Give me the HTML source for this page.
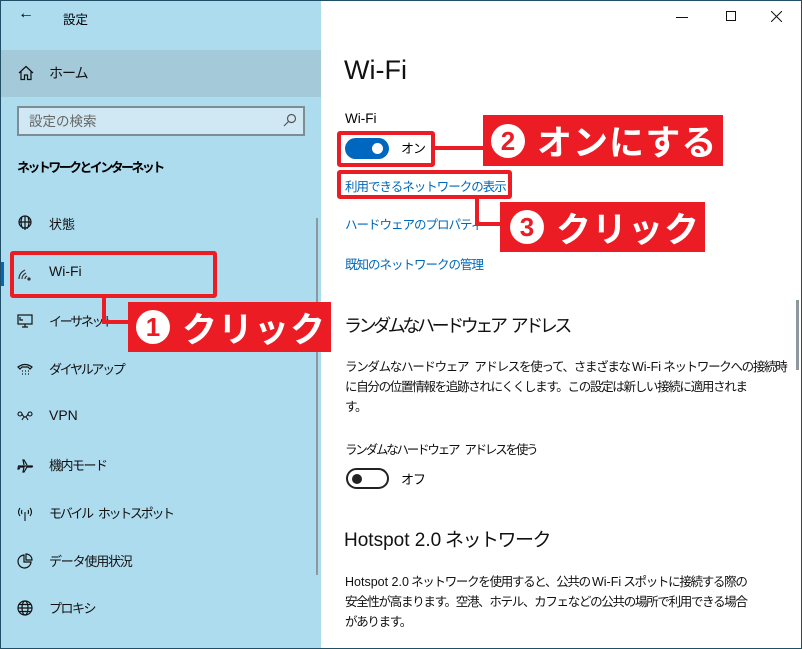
<!DOCTYPE html>
<html><head><meta charset="utf-8"><style>
*{margin:0;padding:0;box-sizing:border-box}
body{width:802px;height:649px;overflow:hidden;background:#fff;font-family:"Liberation Sans","Noto Sans CJK JP",sans-serif;color:#000;position:relative}
.a{position:absolute;white-space:nowrap}
#frame{position:absolute;left:0;top:0;width:802px;height:649px;border:1px solid #1f4e66;pointer-events:none;z-index:50}
#left{position:absolute;left:0;top:0;width:321px;height:649px;background:#aedcef}
.nav{font-size:13px;color:#111;letter-spacing:-2.3px}
.ic{position:absolute;left:17px}
.link{color:#0067b8;font-size:12.5px;letter-spacing:-1px}
.red{position:absolute;background:#ec1c24}
.rb{position:absolute;border:4px solid #ec1c24;border-radius:3px}
.lab{position:absolute;background:#ec1c24;color:#fff;font-weight:bold;font-size:35px;display:flex;align-items:center;white-space:nowrap;letter-spacing:1px}
.num{display:inline-block;width:34px;height:34px;border-radius:50%;background:#fff;color:#ec1c24;font-size:26px;text-align:center;line-height:34px;margin-right:12px;letter-spacing:0}
p.t{font-size:12.5px;line-height:20px;color:#111;letter-spacing:-1.3px}
.l{letter-spacing:0}
.sp{display:inline-block;width:6px}
</style></head><body>
<div id="left">
  <div class="a" style="left:18px;top:5px;font-size:16px">&#8592;</div>
  <div class="a" style="left:63px;top:9px;font-size:12.5px">設定</div>
  <div class="a" style="left:0;top:50px;width:321px;height:47px;background:#a4c9d9"></div>
  <svg class="a" style="left:18px;top:65px" width="16" height="16" viewBox="0 0 16 16" fill="none" stroke="#111" stroke-width="1.2"><path d="M1 8 L8 1.5 L15 8 M3 6.5 V14.5 H6.5 V10 H9.5 V14.5 H13 V6.5"/></svg>
  <div class="a nav" style="left:49px;top:63px;font-size:14px;letter-spacing:-1px">ホーム</div>
  <div class="a" style="left:17px;top:106px;width:288px;height:30px;border:2px solid #7e8d94;background:#cfe8f3"></div>
  <div class="a" style="left:29px;top:110px;font-size:13.5px;color:#666">設定の検索</div>
  <svg class="a" style="left:283px;top:113px" width="14" height="14" viewBox="0 0 14 14" fill="none" stroke="#555" stroke-width="1.2"><circle cx="8.5" cy="5.5" r="4"/><path d="M5.5 8.5 L1 13"/></svg>
  <div class="a" style="left:17px;top:157px;font-size:13px;font-weight:bold;letter-spacing:-2.6px">ネットワークとインターネット</div>
  <div class="a" style="left:316px;top:218px;width:2px;height:357px;background:#8d989c"></div>
  <svg class="ic" style="top:215px" width="16" height="16" viewBox="0 0 16 16" fill="none" stroke="#111" stroke-width="1.2"><circle cx="8" cy="7" r="6"/><path d="M2 7 H14 M8 1 V13 M5 2 Q3 7 5 12 M11 2 Q13 7 11 12 M5 13 H11 M8 13 V15"/></svg>
  <div class="a nav" style="left:49px;top:214px;letter-spacing:0">状態</div>
  <div class="a" style="left:0;top:262px;width:4px;height:24px;background:#0067c0"></div>
  <svg class="ic" style="top:266px" width="16" height="16" viewBox="0 0 16 16" fill="none" stroke="#333" stroke-width="1.2"><path d="M2 13 Q2 7 8 4 M5 13 Q5 9 9 7 M8 13 Q8 11 10 10"/><circle cx="12" cy="13" r="1" fill="#333"/></svg>
  <div class="a nav" style="left:49px;top:263px;font-size:14px;letter-spacing:0">Wi-Fi</div>
  <svg class="ic" style="top:313px" width="16" height="16" viewBox="0 0 16 16" fill="none" stroke="#111" stroke-width="1.2"><rect x="1" y="2" width="14" height="9"/><path d="M5 14 H11 M8 11 V14 M3 4 V7 H6"/></svg>
  <div class="a nav" style="left:49px;top:311px">イーサネット</div>
  <svg class="ic" style="top:362px" width="16" height="16" viewBox="0 0 16 16" fill="none" stroke="#111" stroke-width="1.2"><path d="M1 5 Q8 0 15 5 L13 7 L11 5 H5 L3 7 Z" /><path d="M5 9h1M8 9h1M11 9h1M5 12h1M8 12h1M11 12h1"/></svg>
  <div class="a nav" style="left:49px;top:359px">ダイヤルアップ</div>
  <svg class="ic" style="top:411px" width="16" height="12" viewBox="0 0 16 12" fill="none" stroke="#111" stroke-width="1.1"><circle cx="3" cy="3" r="2"/><circle cx="13" cy="3" r="2"/><path d="M5 3 Q8 9 11 3 M5 9 Q8 3 11 9"/></svg>
  <div class="a nav" style="left:49px;top:407px;font-size:14px;letter-spacing:0">VPN</div>
  <svg class="ic" style="top:458px" width="17" height="16" viewBox="0 0 17 16" fill="none" stroke="#111" stroke-width="1.2"><path d="M1 8 H15 Q16 8 15 9 L10 9 L7 14 H6 L7 9 H3 L2 11 H1 L1.5 8 M7 7 L6 2 H7 L10 7"/></svg>
  <div class="a nav" style="left:49px;top:455px;letter-spacing:-1.5px">機内モード</div>
  <svg class="ic" style="top:506px" width="16" height="16" viewBox="0 0 16 16" fill="none" stroke="#111" stroke-width="1.1"><path d="M3 2 Q0 6 3 10 M13 2 Q16 6 13 10 M5 4 Q4 6 5 8 M11 4 Q12 6 11 8 M8 6 V15"/></svg>
  <div class="a nav" style="left:49px;top:503px">モバイル<span class="sp"></span>ホットスポット</div>
  <svg class="ic" style="top:553px" width="16" height="16" viewBox="0 0 16 16" fill="none" stroke="#111" stroke-width="1.2"><path d="M7 2 A6.5 6.5 0 1 0 14 9 H7 Z M9 1 A6 6 0 0 1 15 7 H9 Z"/></svg>
  <div class="a nav" style="left:49px;top:551px;letter-spacing:-1.2px">データ使用状況</div>
  <svg class="ic" style="top:600px" width="16" height="16" viewBox="0 0 16 16" fill="none" stroke="#111" stroke-width="1.2"><circle cx="8" cy="8" r="7"/><ellipse cx="8" cy="8" rx="3" ry="7"/><path d="M1 8 H15 M2 4.5 H14 M2 11.5 H14"/></svg>
  <div class="a nav" style="left:49px;top:598px;letter-spacing:-1.5px">プロキシ</div>
</div>

<div class="a" style="left:676px;top:17px;width:12px;height:1px;background:#111"></div>
<div class="a" style="left:726px;top:11px;width:10px;height:10px;border:1px solid #111"></div>
<svg class="a" style="left:771px;top:11px" width="11" height="11" viewBox="0 0 11 11" stroke="#111" stroke-width="1"><path d="M0 0 L11 11 M11 0 L0 11"/></svg>
<div class="a" style="left:796px;top:300px;width:3px;height:70px;background:#8d989c"></div>

<div class="a" style="left:344px;top:55px;font-size:27px;font-weight:300;color:#111">Wi-Fi</div>
<div class="a" style="left:345px;top:111px;font-size:13.5px">Wi-Fi</div>
<div class="a" style="left:345px;top:138px;width:44px;height:21px;border-radius:11px;background:#0067c0"></div>
<div class="a" style="left:372px;top:143px;width:11px;height:11px;border-radius:50%;background:#fff"></div>
<div class="a" style="left:401px;top:138px;font-size:13px;letter-spacing:-1px">オン</div>
<div class="a link" style="left:345px;top:176px">利用できるネットワークの表示</div>
<div class="a link" style="left:345px;top:214px">ハードウェアのプロパティ</div>
<div class="a link" style="left:345px;top:254px">既知のネットワークの管理</div>

<div class="a" style="left:344px;top:312px;font-size:18px;color:#111;letter-spacing:-3.4px">ランダムなハードウェア<span class="sp"></span>アドレス</div>
<div class="a" style="left:345px;top:357px"><p class="t">ランダムなハードウェア<span class="sp"></span>アドレスを使って、さまざまな <span class="l">Wi-Fi</span> ネットワークへの接続時<br>に自分の位置情報を追跡されにくくします。この設定は新しい接続に適用されま<br>す。</p></div>
<div class="a" style="left:345px;top:439px;font-size:12.5px;color:#111;letter-spacing:-2.2px">ランダムなハードウェア<span class="sp"></span>アドレスを使う</div>
<div class="a" style="left:346px;top:468px;width:43px;height:21px;border-radius:11px;border:2px solid #222"></div>
<div class="a" style="left:352px;top:474px;width:10px;height:10px;border-radius:50%;background:#222"></div>
<div class="a" style="left:401px;top:469px;font-size:13px;letter-spacing:-1px">オフ</div>

<div class="a" style="left:344px;top:525px;font-size:19px;color:#111;letter-spacing:-1.5px"><span class="l">Hotspot 2.0</span> ネットワーク</div>
<div class="a" style="left:345px;top:572px"><p class="t"><span class="l">Hotspot 2.0</span> ネットワークを使用すると、公共の <span class="l">Wi-Fi</span> スポットに接続する際の<br>安全性が高まります。空港、ホテル、カフェなどの公共の場所で利用できる場合<br>があります。</p></div>

<div class="rb" style="left:10px;top:251px;width:207px;height:47px"></div>
<div class="red" style="left:102px;top:297px;width:4px;height:27px"></div>
<div class="red" style="left:102px;top:320px;width:30px;height:4px"></div>
<div class="lab" style="left:128px;top:302px;width:203px;height:50px;padding-left:8px"><span class="num">1</span>クリック</div>

<div class="rb" style="left:337px;top:131px;width:98px;height:36px"></div>
<div class="red" style="left:434px;top:146px;width:52px;height:4px"></div>
<div class="lab" style="left:483px;top:115px;width:240px;height:51px;padding-left:8px"><span class="num">2</span>オンにする</div>

<div class="rb" style="left:337px;top:170px;width:175px;height:29px"></div>
<div class="red" style="left:475px;top:197px;width:4px;height:29px"></div>
<div class="red" style="left:475px;top:222px;width:28px;height:4px"></div>
<div class="lab" style="left:500px;top:202px;width:205px;height:50px;padding-left:10px"><span class="num">3</span>クリック</div>

<div id="frame"></div>
</body></html>
